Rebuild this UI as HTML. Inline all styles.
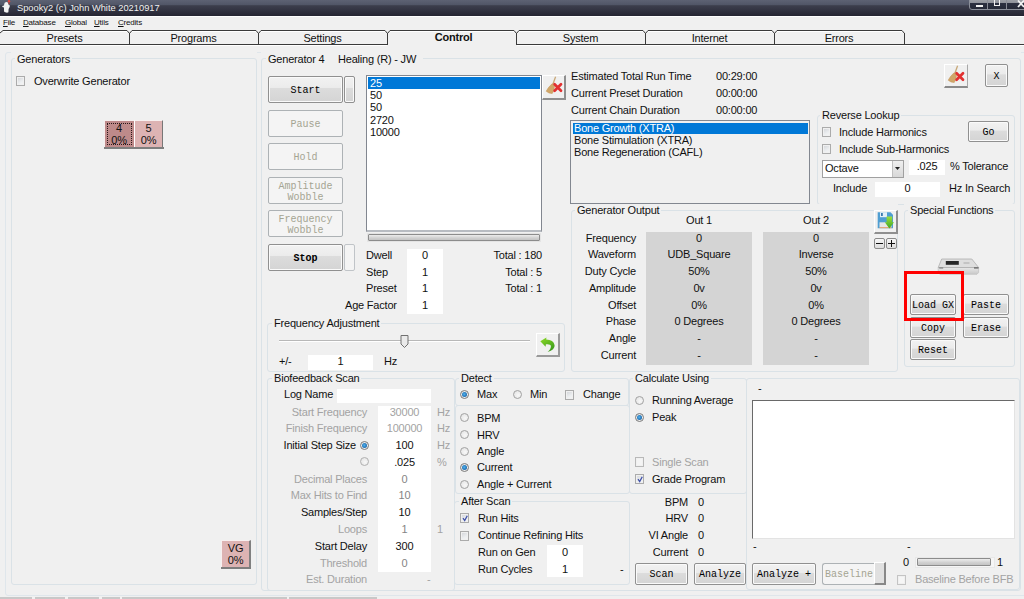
<!DOCTYPE html>
<html><head><meta charset="utf-8">
<style>
*{box-sizing:border-box;margin:0;padding:0}
html,body{width:1024px;height:599px;overflow:hidden;background:#f0f0f0}
body{position:relative;font-family:"Liberation Sans",sans-serif;font-size:11px;color:#111}
.a{position:absolute}
.t{position:absolute;white-space:nowrap;line-height:13px;height:13px;letter-spacing:-0.2px}
.r{text-align:right}
.c{text-align:center}
.dis{color:#a3a3a3}
.gb{position:absolute;border:1px solid #dae2e7;border-radius:3px}
.gl{position:absolute;background:linear-gradient(transparent 0,transparent 2px,#f0f0f0 2px);padding:1px 2px 0 2px;line-height:13px;white-space:nowrap;letter-spacing:-0.2px}
.btn{position:absolute;border:1px solid #909090;border-radius:2px;background:linear-gradient(#f2f2f2 0,#ebebeb 44%,#dcdcdc 46%,#d4d4d4 100%);font-family:"Liberation Mono",monospace;font-size:10px;color:#000;text-align:center;box-shadow:inset 0 0 0 1px #fafafa;padding-top:1px}
.btnd{position:absolute;border:1px solid #adb2b5;border-radius:2px;background:#f4f4f4;font-family:"Liberation Mono",monospace;font-size:10px;color:#a4a492;text-align:center;padding-top:1px}
.wb{position:absolute;background:#fff}
.cb{position:absolute;width:9px;height:9.5px;border:1px solid #ababab;background:linear-gradient(150deg,#d0d2d6,#eceef0 60%,#f6f6f6);box-shadow:inset 0 0 0 1px #f0f0f0}
.rd{position:absolute;width:9px;height:9px;border:1px solid #a2a2a2;border-radius:50%;background:radial-gradient(circle at 60% 60%,#f8f8f8 0,#e0e0e0 100%)}
.rd.on{border-color:#7a7a7a}.rd.on::after{content:"";position:absolute;left:1px;top:1px;width:5px;height:5px;border-radius:50%;background:radial-gradient(circle at 45% 45%,#50b4f0 0,#1a64a8 75%,#2a4a70 100%)}
</style></head><body>

<!-- title bar -->
<div class="a" style="left:0;top:0;width:1024px;height:16px;background:linear-gradient(#5d6273 0,#505566 32%,#3c3e4c 35%,#30313f 70%,#252532 100%)"></div>
<div class="t" style="left:17px;top:2px;font-size:9.3px;color:#f0f0f0;line-height:12px;letter-spacing:0">Spooky2 (c) John White 20210917</div>


<!-- title icon + window buttons -->
<svg class="a" style="left:0;top:0" width="14" height="15" viewBox="0 0 14 15">
 <path d="M6.2 1.9 Q4.2 2.1 4.2 4.3 L4 5.6 L2.2 6.1 L2.4 7 L4 7.4 L4 10.5 L4.3 12 L7 12.8 L8.4 12.2 L8.6 9 L9.4 7.6 L10 5.6 L8.6 5 Q8.6 2 6.2 1.9 Z" fill="#f2f2f2"/>
 <circle cx="9" cy="1.3" r="1.2" fill="#e5483e"/><circle cx="9" cy="3.2" r="0.8" fill="#b53a32"/>
</svg>
<div class="a" style="left:969px;top:-2px;width:60px;height:12px;border:1px solid #8c909a;border-radius:0 0 3px 3px;background:linear-gradient(#a0a3aa 0,#8e9199 40%,#2c3040 45%,#262a38 100%)"></div>
<div class="a" style="left:987px;top:0;width:1px;height:9px;background:#8a8d96"></div>
<div class="a" style="left:1006px;top:0;width:1px;height:9px;background:#8a8d96"></div>
<div class="a" style="left:976px;top:5px;width:7px;height:2px;background:#f0f0f0"></div>
<div class="a" style="left:994px;top:0;width:6px;height:6px;border:1.5px solid #f0f0f0;border-top:none"></div>
<svg class="a" style="left:1017px;top:0" width="8" height="8"><path d="M1 0.5 L7 7 M7 0.5 L1 7" stroke="#f4f4f4" stroke-width="1.8"/></svg>

<!-- menu -->
<div class="a" style="left:0;top:16px;width:1024px;height:14px;background:#f0f0f0"></div><div class="a" style="left:0;top:16px;width:1024px;height:1px;background:#ffffff"></div>
<div class="t" style="left:3px;top:17px;font-size:8px;line-height:12px"><u>F</u>ile</div>
<div class="t" style="left:23px;top:17px;font-size:8px;line-height:12px"><u>D</u>atabase</div>
<div class="t" style="left:65px;top:17px;font-size:8px;line-height:12px"><u>G</u>lobal</div>
<div class="t" style="left:94px;top:17px;font-size:8px;line-height:12px"><u>U</u>tils</div>
<div class="t" style="left:118px;top:17px;font-size:8px;line-height:12px"><u>C</u>redits</div>


<!-- tabs -->
<svg class="a" style="left:0;top:0" width="1024" height="50">
<rect x="0" y="45" width="387" height="1" fill="#ffffff"/><rect x="517" y="45" width="507" height="1" fill="#ffffff"/>
<rect x="0" y="44" width="387" height="1" fill="#3a3a3a"/><rect x="517" y="44" width="507" height="1" fill="#3a3a3a"/>
<rect x="3" y="30" width="124" height="1" fill="#3a3a3a"/>
<rect x="3" y="31" width="124" height="1" fill="#ffffff"/>
<rect x="132" y="30" width="124" height="1" fill="#3a3a3a"/>
<rect x="132" y="31" width="124" height="1" fill="#ffffff"/>
<rect x="261" y="30" width="124" height="1" fill="#3a3a3a"/>
<rect x="261" y="31" width="124" height="1" fill="#ffffff"/>
<rect x="390" y="30" width="124" height="1" fill="#3a3a3a"/>
<rect x="390" y="31" width="124" height="1" fill="#ffffff"/>
<rect x="519" y="30" width="124" height="1" fill="#3a3a3a"/>
<rect x="519" y="31" width="124" height="1" fill="#ffffff"/>
<rect x="648" y="30" width="124" height="1" fill="#3a3a3a"/>
<rect x="648" y="31" width="124" height="1" fill="#ffffff"/>
<rect x="777" y="30" width="125" height="1" fill="#3a3a3a"/>
<rect x="777" y="31" width="125" height="1" fill="#ffffff"/>
<rect x="129" y="33" width="1" height="12" fill="#3a3a3a"/>
<rect x="258" y="33" width="1" height="12" fill="#3a3a3a"/>
<rect x="387" y="33" width="1" height="12" fill="#3a3a3a"/>
<rect x="516" y="33" width="1" height="12" fill="#3a3a3a"/>
<rect x="645" y="33" width="1" height="12" fill="#3a3a3a"/>
<rect x="774" y="33" width="1" height="12" fill="#3a3a3a"/>
<rect x="904" y="33" width="1" height="12" fill="#3a3a3a"/>
<path d="M0 33 L3 30.5" stroke="#3a3a3a" stroke-width="1" fill="none"/>
<path d="M127 30.5 L129.5 33.5" stroke="#3a3a3a" stroke-width="1" fill="none"/>
<path d="M129.5 33.5 L132 30.5" stroke="#3a3a3a" stroke-width="1" fill="none"/>
<path d="M256 30.5 L258.5 33.5" stroke="#3a3a3a" stroke-width="1" fill="none"/>
<path d="M258.5 33.5 L261 30.5" stroke="#3a3a3a" stroke-width="1" fill="none"/>
<path d="M385 30.5 L387.5 33.5" stroke="#3a3a3a" stroke-width="1" fill="none"/>
<path d="M387.5 33.5 L390 30.5" stroke="#3a3a3a" stroke-width="1" fill="none"/>
<path d="M514 30.5 L516.5 33.5" stroke="#3a3a3a" stroke-width="1" fill="none"/>
<path d="M516.5 33.5 L519 30.5" stroke="#3a3a3a" stroke-width="1" fill="none"/>
<path d="M643 30.5 L645.5 33.5" stroke="#3a3a3a" stroke-width="1" fill="none"/>
<path d="M645.5 33.5 L648 30.5" stroke="#3a3a3a" stroke-width="1" fill="none"/>
<path d="M772 30.5 L774.5 33.5" stroke="#3a3a3a" stroke-width="1" fill="none"/>
<path d="M774.5 33.5 L777 30.5" stroke="#3a3a3a" stroke-width="1" fill="none"/>
<path d="M902 30.5 L904.5 33.5" stroke="#3a3a3a" stroke-width="1" fill="none"/>
</svg>
<div class="t c" style="left:0px;top:32px;width:129px;">Presets</div>
<div class="t c" style="left:129px;top:32px;width:129px;">Programs</div>
<div class="t c" style="left:258px;top:32px;width:129px;">Settings</div>
<div class="t c" style="left:389px;top:31px;width:129px;font-weight:bold;">Control</div>
<div class="t c" style="left:516px;top:32px;width:129px;">System</div>
<div class="t c" style="left:645px;top:32px;width:129px;">Internet</div>
<div class="t c" style="left:774px;top:32px;width:130px;">Errors</div>

<!-- outer frames -->
<div class="gb" style="left:5px;top:52px;width:1030px;height:544px;border-color:#dfe6eb"></div>
<div class="a" style="left:0;top:596px;width:1024px;height:3px;background:#f0f0f0"></div>
<div class="a" style="left:0;top:597px;width:32px;height:2px;background:#c8c8c8"></div>
<div class="a" style="left:35px;top:597px;width:30px;height:2px;background:#c8c8c8"></div>
<div class="a" style="left:68px;top:597px;width:31px;height:2px;background:#c8c8c8"></div>
<div class="a" style="left:102px;top:597px;width:18px;height:2px;background:#c8c8c8"></div>
<div class="a" style="left:122px;top:597px;width:165px;height:2px;background:#c8c8c8"></div>
<div class="a" style="left:289px;top:597px;width:88px;height:2px;background:#c8c8c8"></div>

<div class="a" style="left:11px;top:50px;width:246px;height:5px;background:#f0f0f0"></div>
<div class="a" style="left:261px;top:50px;width:760px;height:5px;background:#f0f0f0"></div>
<!-- Generators group -->
<div class="gb" style="left:11px;top:58px;width:246px;height:527px"></div>
<div class="gl" style="left:15px;top:52px">Generators</div>
<div class="cb" style="left:16px;top:76px"></div>
<div class="t" style="left:34px;top:75px">Overwrite Generator</div>
<div class="a" style="left:104px;top:120px;width:30px;height:27px;background:#be8a8a;border-top:1px solid #f6eeee;border-left:1px solid #f6eeee"></div>
<div class="a" style="left:107px;top:123px;width:25px;height:22px;border:1px dotted #2a1818"></div>
<div class="a" style="left:134px;top:120px;width:29px;height:27px;background:#ddb3b3;border-top:1px solid #f8f0f0;border-left:1px solid #ffffff;border-right:1px solid #777"></div>
<div class="a" style="left:104px;top:147px;width:60px;height:2px;background:#7e7e7e"></div>
<div class="t c" style="left:104px;top:122px;width:30px;line-height:12px;letter-spacing:-0.3px">4</div>
<div class="t c" style="left:104px;top:134px;width:30px;line-height:12px;letter-spacing:-0.3px">0%</div>
<div class="t c" style="left:134px;top:122px;width:29px;line-height:12px;letter-spacing:-0.3px">5</div>
<div class="t c" style="left:134px;top:134px;width:29px;line-height:12px;letter-spacing:-0.3px">0%</div>
<div class="a" style="left:221px;top:540px;width:30px;height:27px;background:#ddb3b3;border-top:1px solid #f8f0f0;border-left:1px solid #f8f0f0;border-right:2px solid #808080"></div>
<div class="a" style="left:221px;top:567px;width:30px;height:2px;background:#7e7e7e"></div>
<div class="t c" style="left:221px;top:542px;width:29px;line-height:12px;letter-spacing:-0.2px">VG</div>
<div class="t c" style="left:221px;top:554px;width:29px;line-height:12px;letter-spacing:-0.2px">0%</div>

<!-- Generator 4 group -->
<div class="gb" style="left:261px;top:58px;width:760px;height:533px"></div>
<div class="gl" style="left:266px;top:52px;width:157px;padding-right:6px">Generator 4</div><div class="t" style="left:338px;top:53px">Healing (R) - JW</div>

<div class="btn" style="left:268px;top:76px;width:75px;height:27px;line-height:25px">Start</div>
<div class="btn" style="left:344px;top:76px;width:11px;height:27px"></div>
<div class="btnd" style="left:268px;top:110px;width:75px;height:27px;line-height:25px">Pause</div>
<div class="btnd" style="left:268px;top:143px;width:75px;height:27px;line-height:25px">Hold</div>
<div class="btnd" style="left:268px;top:177px;width:75px;height:27px;line-height:11px;padding-top:3px">Amplitude<br>Wobble</div>
<div class="btnd" style="left:268px;top:210px;width:75px;height:27px;line-height:11px;padding-top:3px">Frequency<br>Wobble</div>
<div class="btn" style="left:268px;top:244px;width:75px;height:27px;line-height:25px;font-weight:bold">Stop</div>
<div class="btnd" style="left:344px;top:244px;width:11px;height:27px;border-color:#c0c4c8"></div>

<!-- preset list -->
<div class="a" style="left:366px;top:75px;width:176px;height:157px;background:#fff;border:1px solid #828790;border-bottom:2px solid #b8bcc2"></div>
<div class="a" style="left:368px;top:77px;width:172px;height:12px;background:#0078d7"></div>
<div class="t" style="left:370px;top:77px;color:#fff;line-height:12px">25</div>
<div class="t" style="left:370px;top:89px;line-height:12px">50</div>
<div class="t" style="left:370px;top:101px;line-height:12px">50</div>
<div class="t" style="left:370px;top:114px;line-height:12px">2720</div>
<div class="t" style="left:370px;top:126px;line-height:12px">10000</div>
<div class="a" style="left:367px;top:233px;width:174px;height:9px;background:#f6f6f6;border:1px solid #e4e4e4"></div><div class="a" style="left:368px;top:234px;width:172px;height:7px;border:1px solid #8c8c8c;border-radius:1px;background:linear-gradient(#ececec,#d0d0d0 60%,#c4c4c4)"></div>

<!-- dwell etc -->
<div class="wb" style="left:407px;top:249px;width:36px;height:65px"></div>
<div class="t" style="left:366px;top:249px">Dwell</div>
<div class="t" style="left:366px;top:266px">Step</div>
<div class="t" style="left:366px;top:282px">Preset</div>
<div class="t" style="left:345px;top:299px">Age Factor</div>
<div class="t c" style="left:407px;top:249px;width:36px">0</div>
<div class="t c" style="left:407px;top:266px;width:36px">1</div>
<div class="t c" style="left:407px;top:282px;width:36px">1</div>
<div class="t c" style="left:407px;top:299px;width:36px">1</div>
<div class="t r" style="left:441px;top:249px;width:101px">Total : 180</div>
<div class="t r" style="left:441px;top:266px;width:101px">Total : 5</div>
<div class="t r" style="left:441px;top:282px;width:101px">Total : 1</div>

<!-- broom buttons -->
<div class="a" style="left:542px;top:75px;width:24px;height:25px;background:#f0f0f0;border-left:1px solid #fff;border-top:1px solid #fff;border-right:2px solid #8f8f8f;border-bottom:2px solid #8f8f8f"></div>
<svg class="a" style="left:542px;top:75px" width="22" height="22" viewBox="0 0 22 22">
 <path d="M13.6 1.8 L10.6 10" stroke="#c8a878" stroke-width="1.3"/>
 <path d="M10 8.8 L12.6 10.6 L11.8 15.5 L10.2 18.6 L7 18 L4.2 16.2 L6.5 12.5 Z" fill="#d0a668" stroke="#c09050" stroke-width="0.5"/>
 <path d="M12.6 9.3 L19 15.8 M19 9.3 L12.6 15.8" stroke="#e23030" stroke-width="2.7" stroke-linecap="round"/>
</svg>
<div class="a" style="left:944px;top:64px;width:24px;height:24px;background:#f0f0f0;border-left:1px solid #fff;border-top:1px solid #fff;border-right:1px solid #a8a8a8;border-bottom:2px solid #8a8a8a"></div>
<svg class="a" style="left:944px;top:64px" width="22" height="22" viewBox="0 0 22 22">
 <path d="M13.6 1.8 L10.6 10" stroke="#c8a878" stroke-width="1.3"/>
 <path d="M10 8.8 L12.6 10.6 L11.8 15.5 L10.2 18.6 L7 18 L4.2 16.2 L6.5 12.5 Z" fill="#d0a668" stroke="#c09050" stroke-width="0.5"/>
 <path d="M12.6 9.3 L19 15.8 M19 9.3 L12.6 15.8" stroke="#e23030" stroke-width="2.7" stroke-linecap="round"/>
</svg>
<div class="btn" style="left:985px;top:64px;width:23px;height:23px;line-height:21px">X</div>

<!-- run time -->
<div class="t" style="left:571px;top:70px">Estimated Total Run Time</div>
<div class="t" style="left:571px;top:87px">Current Preset Duration</div>
<div class="t" style="left:571px;top:104px">Current Chain Duration</div>
<div class="t" style="left:716px;top:70px">00:29:00</div>
<div class="t" style="left:716px;top:87px">00:00:00</div>
<div class="t" style="left:716px;top:104px">00:00:00</div>

<!-- chain list -->
<div class="a" style="left:570px;top:120px;width:240px;height:84px;background:#f0f0f0;border:1px solid #828790"></div>
<div class="a" style="left:573px;top:123px;width:235px;height:11px;background:#0078d7"></div>
<div class="t" style="left:574px;top:122px;color:#fff;line-height:12px">Bone Growth (XTRA)</div>
<div class="t" style="left:574px;top:134px;line-height:12px">Bone Stimulation (XTRA)</div>
<div class="t" style="left:574px;top:146px;line-height:12px">Bone Regeneration (CAFL)</div>

<!-- reverse lookup -->
<div class="gb" style="left:817px;top:115px;width:198px;height:90px"></div>
<div class="gl" style="left:820px;top:108px">Reverse Lookup</div>
<div class="cb" style="left:822px;top:127px"></div>
<div class="t" style="left:839px;top:126px">Include Harmonics</div>
<div class="cb" style="left:822px;top:144px"></div>
<div class="t" style="left:839px;top:143px">Include Sub-Harmonics</div>
<div class="btn" style="left:968px;top:121px;width:41px;height:21px;line-height:19px">Go</div>
<div class="a" style="left:822px;top:160px;width:82px;height:18px;background:#fff;border:1px solid #a0a0a0"></div>
<div class="t" style="left:825px;top:162px">Octave</div>
<div class="a" style="left:892px;top:161px;width:11px;height:16px;background:linear-gradient(#f0f0f0,#d8d8d8);border-left:1px solid #c0c0c0"></div>
<svg class="a" style="left:895px;top:167px" width="6" height="4"><path d="M0 0H5L2.5 3Z" fill="#222"/></svg>
<div class="wb" style="left:909px;top:160px;width:36px;height:15px"></div>
<div class="t c" style="left:909px;top:160px;width:36px">.025</div>
<div class="t" style="left:950px;top:160px">% Tolerance</div>
<div class="t" style="left:833px;top:182px">Include</div>
<div class="wb" style="left:875px;top:182px;width:65px;height:15px"></div>
<div class="t c" style="left:875px;top:182px;width:65px">0</div>
<div class="t" style="left:949px;top:182px">Hz In Search</div>

<!-- generator output -->
<div class="a" style="left:571px;top:204px;width:327px;height:5px;background:#f0f0f0"></div><div class="a" style="left:904px;top:204px;width:111px;height:5px;background:#f0f0f0"></div>
<div class="gb" style="left:571px;top:210px;width:327px;height:162px"></div>
<div class="gl" style="left:575px;top:203px">Generator Output</div>
<div class="t c" style="left:646px;top:214px;width:106px">Out 1</div>
<div class="t c" style="left:763px;top:214px;width:106px">Out 2</div>
<div class="a" style="left:646px;top:232px;width:106px;height:133px;background:#d4d4d4"></div>
<div class="a" style="left:763px;top:232px;width:106px;height:133px;background:#d4d4d4"></div>
<div class="t r" style="left:560px;top:232px;width:76px">Frequency</div>
<div class="t c" style="left:646px;top:232px;width:106px">0</div>
<div class="t c" style="left:763px;top:232px;width:106px">0</div>
<div class="t r" style="left:560px;top:248px;width:76px">Waveform</div>
<div class="t c" style="left:646px;top:248px;width:106px">UDB_Square</div>
<div class="t c" style="left:763px;top:248px;width:106px">Inverse</div>
<div class="t r" style="left:560px;top:265px;width:76px">Duty Cycle</div>
<div class="t c" style="left:646px;top:265px;width:106px">50%</div>
<div class="t c" style="left:763px;top:265px;width:106px">50%</div>
<div class="t r" style="left:560px;top:282px;width:76px">Amplitude</div>
<div class="t c" style="left:646px;top:282px;width:106px">0v</div>
<div class="t c" style="left:763px;top:282px;width:106px">0v</div>
<div class="t r" style="left:560px;top:299px;width:76px">Offset</div>
<div class="t c" style="left:646px;top:299px;width:106px">0%</div>
<div class="t c" style="left:763px;top:299px;width:106px">0%</div>
<div class="t r" style="left:560px;top:315px;width:76px">Phase</div>
<div class="t c" style="left:646px;top:315px;width:106px">0 Degrees</div>
<div class="t c" style="left:763px;top:315px;width:106px">0 Degrees</div>
<div class="t r" style="left:560px;top:332px;width:76px">Angle</div>
<div class="t c" style="left:646px;top:332px;width:106px">-</div>
<div class="t c" style="left:763px;top:332px;width:106px">-</div>
<div class="t r" style="left:560px;top:349px;width:76px">Current</div>
<div class="t c" style="left:646px;top:349px;width:106px">-</div>
<div class="t c" style="left:763px;top:349px;width:106px">-</div>

<!-- save icon -->
<div class="a" style="left:874px;top:210px;width:24px;height:24px;background:#f0f0f0;border-left:1px solid #fff;border-top:1px solid #fff;border-right:2px solid #8f8f8f;border-bottom:2px solid #8f8f8f"></div>
<svg class="a" style="left:874px;top:210px" width="24" height="24" viewBox="0 0 24 24">
 <defs><linearGradient id="ga" x1="0" y1="0" x2="0" y2="1"><stop offset="0" stop-color="#9ee040"/><stop offset="1" stop-color="#3ea820"/></linearGradient></defs>
 <path d="M3.7 2.2 H16.5 L19 4.7 V18.3 H3.7 Z" fill="#4f9ed2"/>
 <rect x="6" y="2.2" width="7" height="5" fill="#e4f0f8"/>
 <rect x="7" y="3" width="1.8" height="3" fill="#3a7ab0"/>
 <rect x="5.5" y="12.3" width="12" height="5" fill="#e6e6e6"/>
 <rect x="5.5" y="17" width="12" height="1.2" fill="#e0a878"/>
 <path d="M12.6 6.5 H18.2 V12.2 H20 L15.4 18.4 L10.8 12.2 H12.6 Z" fill="url(#ga)"/>
</svg>
<div class="a" style="left:874px;top:238px;width:11px;height:11px;border:1px solid #8a8a8a;border-radius:2px;background:linear-gradient(#f6f6f6,#dcdcdc)"></div>
<div class="a" style="left:876px;top:243px;width:7px;height:1px;background:#111"></div>
<div class="a" style="left:886px;top:238px;width:11px;height:11px;border:1px solid #8a8a8a;border-radius:2px;background:linear-gradient(#f6f6f6,#dcdcdc)"></div>
<div class="a" style="left:888px;top:243px;width:7px;height:1px;background:#111"></div>
<div class="a" style="left:891px;top:240px;width:1px;height:7px;background:#111"></div>

<!-- special functions -->
<div class="gb" style="left:904px;top:210px;width:111px;height:157px"></div>
<div class="gl" style="left:908px;top:203px">Special Functions</div>
<svg class="a" style="left:936px;top:256px" width="44" height="20" viewBox="0 0 44 20">
 <defs><linearGradient id="gd" x1="0" y1="0" x2="0" y2="1"><stop offset="0" stop-color="#e8e8e8"/><stop offset="1" stop-color="#c8c8c8"/></linearGradient></defs>
 <path d="M2.2 11.5 H42.6 V16.5 L41 18.3 H4 L2.2 16.5 Z" fill="url(#gd)" stroke="#b8b8b8" stroke-width="0.6"/>
 <path d="M5.7 3 H35.8 L42.6 11.5 H2.2 Z" fill="#dedede" stroke="#a8a8a8" stroke-width="0.7"/>
 <rect x="9.8" y="5" width="13" height="3.8" fill="#262626"/>
 <rect x="27.5" y="6" width="6" height="2" fill="#c4c4c4"/>
 <rect x="3.2" y="11.5" width="4" height="1" fill="#707070"/>
 <rect x="38" y="11.2" width="4.5" height="1.4" fill="#6a6a6a"/>
</svg>
<div class="btn" style="left:910px;top:294px;width:46px;height:21px;line-height:19px">Load GX</div>
<div class="btn" style="left:963px;top:294px;width:46px;height:21px;line-height:19px">Paste</div>
<div class="btn" style="left:910px;top:317px;width:46px;height:21px;line-height:19px">Copy</div>
<div class="btn" style="left:963px;top:317px;width:46px;height:21px;line-height:19px">Erase</div>
<div class="btn" style="left:910px;top:339px;width:46px;height:21px;line-height:19px">Reset</div>
<div class="a" style="left:904px;top:271px;width:60px;height:50px;border:3px solid #ff0000"></div>

<!-- frequency adjustment -->
<div class="gb" style="left:267px;top:323px;width:298px;height:49px"></div>
<div class="gl" style="left:272px;top:316px">Frequency Adjustment</div>
<div class="a" style="left:279px;top:340px;width:251px;height:1px;background:#b8b8b8"></div>
<div class="a" style="left:279px;top:341px;width:251px;height:1px;background:#fff"></div>
<svg class="a" style="left:400px;top:334px" width="9" height="15" viewBox="0 0 9 15"><path d="M1 1.5 H8 V10 L4.5 13.5 L1 10 Z" fill="#eaeaea" stroke="#707070" stroke-width="1"/></svg>
<div class="t" style="left:279px;top:355px">+/-</div>
<div class="wb" style="left:308px;top:355px;width:65px;height:15px"></div>
<div class="t c" style="left:308px;top:355px;width:65px">1</div>
<div class="t" style="left:384px;top:355px">Hz</div>
<div class="a" style="left:536px;top:333px;width:24px;height:24px;background:#f0f0f0;border-left:1px solid #fff;border-top:1px solid #fff;border-right:2px solid #9a9a9a;border-bottom:2px solid #9a9a9a"></div>
<svg class="a" style="left:536px;top:333px" width="24" height="24" viewBox="0 0 24 24">
 <defs><linearGradient id="gu" x1="0" y1="0" x2="0.6" y2="1"><stop offset="0" stop-color="#90dc28"/><stop offset="1" stop-color="#3c9c1c"/></linearGradient></defs>
 <path d="M4.3 8.3 L10.4 4.4 L10.2 6.6 Q17.6 6.8 18.6 12.2 Q19 17 11.6 18.9 Q15.2 16 14.9 12.8 Q14.6 10.8 9.9 11.3 L9.6 13.7 Z" fill="url(#gu)"/>
</svg>

<!-- biofeedback scan -->
<div class="gb" style="left:267px;top:378px;width:188px;height:213px"></div>
<div class="gl" style="left:272px;top:371px">Biofeedback Scan</div>
<div class="t" style="left:284px;top:388px">Log Name</div>
<div class="wb" style="left:337px;top:389px;width:94px;height:14px"></div>
<div class="wb" style="left:378px;top:406px;width:53px;height:166px"></div>
<div class="t r dis" style="left:257px;top:406px;width:110px">Start Frequency</div>
<div class="t c dis" style="left:378px;top:406px;width:53px">30000</div>
<div class="t dis" style="left:437px;top:406px">Hz</div>
<div class="t r dis" style="left:257px;top:422px;width:110px">Finish Frequency</div>
<div class="t c dis" style="left:378px;top:422px;width:53px">100000</div>
<div class="t dis" style="left:437px;top:422px">Hz</div>
<div class="t r" style="left:246px;top:439px;width:110px">Initial Step Size</div>
<div class="t c" style="left:378px;top:439px;width:53px">100</div>
<div class="t dis" style="left:437px;top:439px">Hz</div>
<div class="t c" style="left:378px;top:456px;width:53px">.025</div>
<div class="t dis" style="left:437px;top:456px">%</div>
<div class="t r dis" style="left:257px;top:473px;width:110px">Decimal Places</div>
<div class="t c" style="left:378px;top:473px;width:53px;color:#858585">0</div>
<div class="t r dis" style="left:257px;top:489px;width:110px">Max Hits to Find</div>
<div class="t c" style="left:378px;top:489px;width:53px;color:#858585">10</div>
<div class="t r" style="left:257px;top:506px;width:110px">Samples/Step</div>
<div class="t c" style="left:378px;top:506px;width:53px">10</div>
<div class="t r dis" style="left:257px;top:523px;width:110px">Loops</div>
<div class="t c" style="left:378px;top:523px;width:53px;color:#858585">1</div>
<div class="t r" style="left:257px;top:540px;width:110px">Start Delay</div>
<div class="t c" style="left:378px;top:540px;width:53px">300</div>
<div class="t r dis" style="left:257px;top:557px;width:110px">Threshold</div>
<div class="t c" style="left:378px;top:557px;width:53px;color:#858585">0</div>
<div class="t r dis" style="left:257px;top:573px;width:110px">Est. Duration</div>

<div class="rd on" style="left:360px;top:441px"></div>
<div class="rd" style="left:360px;top:457px;border-color:#b0b0b0"></div>
<div class="t dis" style="left:437px;top:523px">1</div>
<div class="t dis" style="left:427px;top:573px">-</div>

<!-- detect -->
<div class="gb" style="left:455px;top:378px;width:174px;height:28px"></div>
<div class="gb" style="left:455px;top:405px;width:175px;height:89px"></div>
<div class="gl" style="left:459px;top:371px">Detect</div>
<div class="rd on" style="left:460px;top:390px"></div><div class="t" style="left:477px;top:388px">Max</div>
<div class="rd" style="left:513px;top:390px"></div><div class="t" style="left:530px;top:388px">Min</div>
<div class="cb" style="left:565px;top:390px"></div><div class="t" style="left:583px;top:388px">Change</div>
<div class="rd" style="left:460px;top:413px"></div><div class="t" style="left:477px;top:412px">BPM</div>
<div class="rd" style="left:460px;top:430px"></div><div class="t" style="left:477px;top:429px">HRV</div>
<div class="rd" style="left:460px;top:447px"></div><div class="t" style="left:477px;top:445px">Angle</div>
<div class="rd on" style="left:460px;top:463px"></div><div class="t" style="left:477px;top:461px">Current</div>
<div class="rd" style="left:460px;top:480px"></div><div class="t" style="left:477px;top:478px">Angle + Current</div>

<!-- after scan -->
<div class="gb" style="left:454px;top:501px;width:176px;height:84px"></div>
<div class="gl" style="left:459px;top:494px">After Scan</div>
<div class="cb" style="left:460px;top:513px"></div>
<svg class="a" style="left:461px;top:514px" width="9" height="9"><path d="M2 4.2 L3.7 6.6 L6.3 1.8" stroke="#3f50a8" stroke-width="1.3" fill="none"/></svg>
<div class="t" style="left:478px;top:512px">Run Hits</div>
<div class="cb" style="left:460px;top:531px"></div>
<div class="t" style="left:478px;top:529px">Continue Refining Hits</div>
<div class="t" style="left:478px;top:546px">Run on Gen</div>
<div class="t" style="left:478px;top:563px">Run Cycles</div>
<div class="wb" style="left:547px;top:545px;width:36px;height:32px"></div>
<div class="t c" style="left:547px;top:546px;width:36px">0</div>
<div class="t c" style="left:547px;top:563px;width:36px">1</div>
<div class="t" style="left:620px;top:563px">-</div>

<!-- calculate using -->
<div class="gb" style="left:629px;top:378px;width:118px;height:116px"></div>
<div class="gl" style="left:633px;top:371px">Calculate Using</div>
<div class="rd" style="left:635px;top:396px"></div><div class="t" style="left:652px;top:394px">Running Average</div>
<div class="rd on" style="left:635px;top:413px"></div><div class="t" style="left:652px;top:411px">Peak</div>
<div class="cb" style="left:635px;top:457px;border-color:#b8b8b8;background:#f4f4f4"></div><div class="t dis" style="left:652px;top:456px">Single Scan</div>
<div class="cb" style="left:635px;top:474px"></div>
<svg class="a" style="left:636px;top:475px" width="9" height="9"><path d="M2 4.2 L3.7 6.6 L6.3 1.8" stroke="#3f50a8" stroke-width="1.3" fill="none"/></svg>
<div class="t" style="left:652px;top:473px">Grade Program</div>

<div class="t r" style="left:618px;top:496px;width:70px">BPM</div><div class="t" style="left:698px;top:496px">0</div>
<div class="t r" style="left:618px;top:512px;width:70px">HRV</div><div class="t" style="left:698px;top:512px">0</div>
<div class="t r" style="left:618px;top:529px;width:70px">VI Angle</div><div class="t" style="left:698px;top:529px">0</div>
<div class="t r" style="left:618px;top:546px;width:70px">Current</div><div class="t" style="left:698px;top:546px">0</div>

<div class="btn" style="left:635px;top:563px;width:53px;height:22px;line-height:20px">Scan</div>
<div class="btn" style="left:694px;top:563px;width:52px;height:22px;line-height:20px">Analyze</div>
<div class="btn" style="left:752px;top:563px;width:64px;height:22px;line-height:20px">Analyze +</div>
<div class="btnd" style="left:822px;top:563px;width:53px;height:22px;line-height:20px;border-right:none;border-radius:3px 0 0 3px">Baseline</div>
<div class="a" style="left:874px;top:562px;width:12px;height:23px;background:#e0e0e0;border-left:1px solid #fff;border-top:1px solid #fff;border-right:2px solid #888;border-bottom:2px solid #888"></div>

<!-- right box -->
<div class="gb" style="left:746px;top:378px;width:274px;height:212px"></div>
<div class="t" style="left:758px;top:382px">-</div>
<div class="a" style="left:752px;top:400px;width:263px;height:139px;background:#fff;border-left:1px solid #696969;border-top:1px solid #696969;border-right:1px solid #e3e3e3;border-bottom:1px solid #e3e3e3"></div>
<div class="t" style="left:753px;top:540px">-</div>
<div class="t" style="left:907px;top:540px">-</div>
<div class="t" style="left:903px;top:556px">0</div>
<div class="a" style="left:915px;top:557px;width:80px;height:11px;background:#f6f6f6;border:1px solid #e8e8e8"></div><div class="a" style="left:917px;top:558px;width:74px;height:8px;border:1px solid #8c8c8c;border-radius:1px;background:linear-gradient(#ececec,#d0d0d0 60%,#c4c4c4)"></div>
<div class="t" style="left:997px;top:556px">1</div>
<div class="cb" style="left:897px;top:575px;border-color:#c4c4c4;background:#f6f6f6"></div>
<div class="t dis" style="left:915px;top:573px">Baseline Before BFB</div>
</body></html>
